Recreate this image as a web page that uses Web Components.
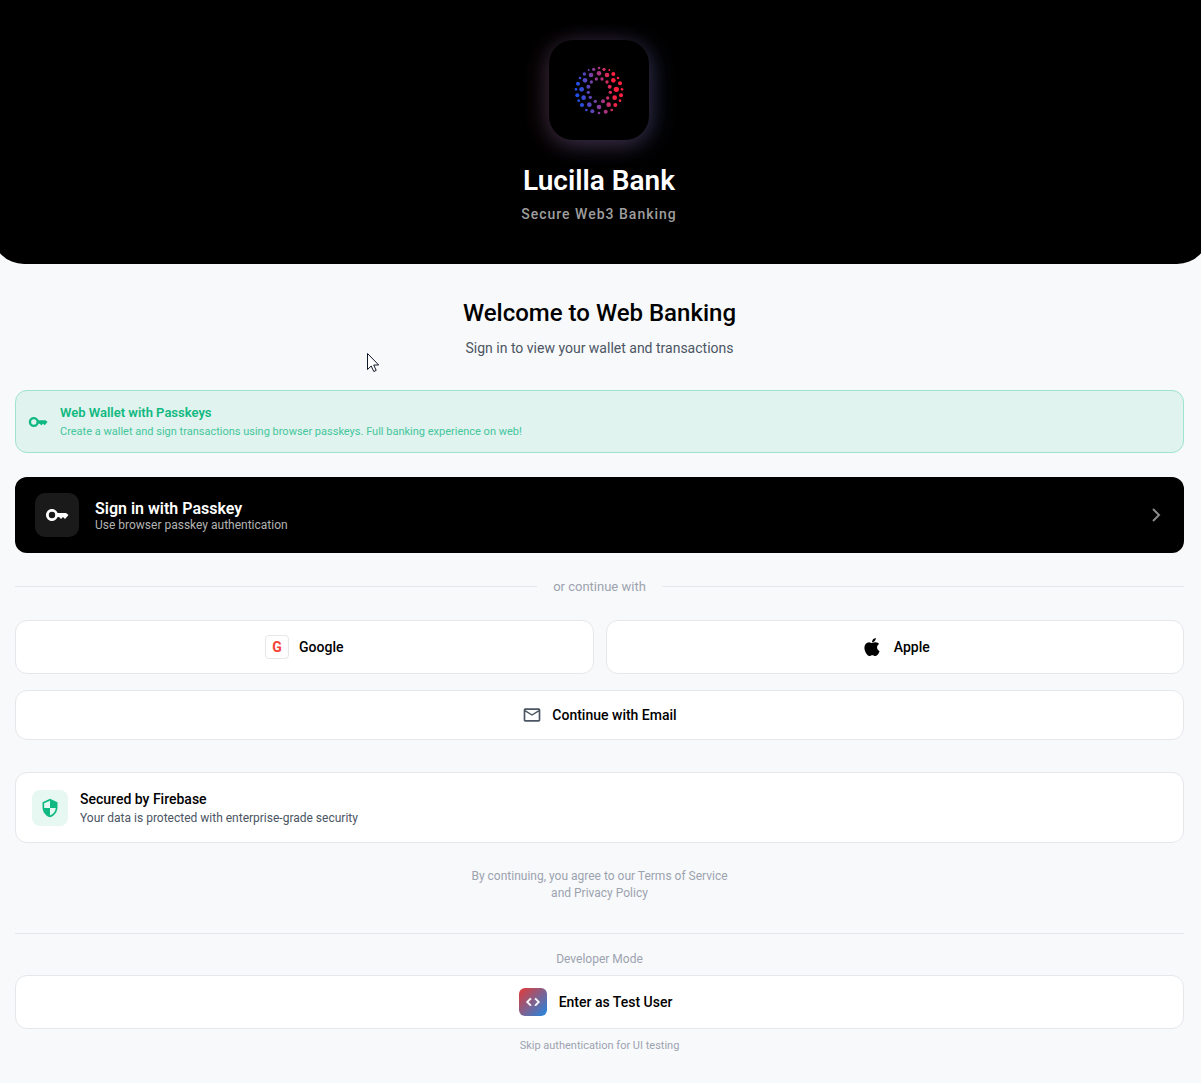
<!DOCTYPE html>
<html lang="en">
<head>
<meta charset="utf-8">
<meta name="viewport" content="width=device-width, initial-scale=1">
<title>Lucilla Bank</title>
<style>
  body {
    margin: 0;
    background: #f8f9fb;
    font-family: Roboto, sans-serif;
    color: #000;
    overflow-x: hidden;
  }
</style>
</head>
<body>
<bank-login></bank-login>
<mouse-pointer></mouse-pointer>

<script>
const define = (name, html) => {
    const template = document.createElement('template')
    template.innerHTML = html
    customElements.define(name, class extends HTMLElement {
        constructor () {
            super()
            this.attachShadow({ mode: 'open' })
            this.shadowRoot.appendChild(template.content.cloneNode(true))
        }
    })
}

// icons, all on a 24 unit grid
const icons = {
    key: '<path d="M12.65 10C11.83 7.67 9.61 6 7 6c-3.31 0-6 2.69-6 6s2.69 6 6 6c2.61 0 4.83-1.67 5.65-4H14l2 2 2-2 2 2 3.5-4L21 10zM7 15.2a3.2 3.2 0 1 1 0-6.4 3.2 3.2 0 0 1 0 6.4z"/>',
    chevron: '<path d="M9 6l6 6-6 6" fill="none" stroke="currentColor" stroke-width="2"/>',
    apple: '<path d="M17.05 20.28c-.98.95-2.05.8-3.08.35-1.09-.46-2.09-.48-3.24 0-1.44.62-2.2.44-3.06-.35C2.79 15.25 3.51 7.59 9.05 7.31c1.35.07 2.29.74 3.08.8 1.18-.24 2.31-.93 3.57-.84 1.51.12 2.65.72 3.4 1.8-3.12 1.87-2.38 5.98.48 7.13-.57 1.5-1.31 2.99-2.54 4.09zM12.03 7.25c-.15-2.23 1.66-4.07 3.74-4.25.29 2.58-2.34 4.5-3.74 4.25z"/>',
    mail: '<path d="M22 6c0-1.100-.9-2-2-2H4c-1.100 0-2 .9-2 2v12c0 1.100.9 2 2 2h16c1.100 0 2-.9 2-2zm-2 0-8 5-8-5zm0 12H4V8l8 5 8-5z"/>',
    shield: '<path d="M12 1 3 5v6c0 5.550 3.840 10.740 9 12 5.160-1.260 9-6.450 9-12V5zm0 10.990h7c-.53 4.120-3.280 7.790-7 8.940V12H5V6.300l7-3.110z"/>',
    code: '<path d="M9.400 16.600 4.800 12l4.600-4.600L8 6l-6 6 6 6zm5.200 0 4.600-4.600-4.600-4.600L16 6l6 6-6 6z" stroke="currentColor"/>'
}

class BankIcon extends HTMLElement {
    constructor () {
        super()
        this.attachShadow({ mode: 'open' })
    }

    connectedCallback () {
        this.shadowRoot.innerHTML = `
            <style>
                :host { display: block; flex: none; width: 20px; height: 20px; }
                svg { display: block; width: 100%; height: 100%; fill: currentColor; }
            </style>
            <svg viewBox="0 0 24 24" aria-hidden="true">${icons[this.getAttribute('name')]}</svg>
        `
    }
}
customElements.define('bank-icon', BankIcon)

// three rings of dots: [x, y, radius]
const dots = [
    [267, 172, 4], [282, 176, 5], [298, 178, 3], [310, 190, 6], [324, 202, 4], [330, 218, 6],
    [336, 236, 4], [333, 254, 6], [330, 270, 4], [316, 283, 6], [305, 298, 4], [287, 303, 6],
    [267, 307, 4], [247, 302, 6], [229, 298, 4], [216, 283, 6], [206, 270, 4], [202, 254, 6],
    [198, 236, 4], [204, 219, 6], [210, 202, 4], [223, 190, 5], [236, 178, 3], [251, 176, 5],
    [267, 188, 7], [291, 193, 7], [310, 209, 7], [319, 236, 8], [314, 261, 7], [296, 282, 7],
    [267, 289, 7], [238, 282, 7], [221, 261, 7], [215, 236, 7], [225, 209, 7], [243, 193, 7],
    [276, 205, 5], [291, 214, 5], [299, 228, 6], [301, 245, 5], [293, 262, 5], [279, 272, 6],
    [256, 272, 5], [241, 260, 5], [235, 245, 5], [235, 228, 6], [244, 214, 5], [259, 205, 5]
]

define('bank-logo', `
    <style>
        :host {
            display: flex;
            align-items: center;
            justify-content: center;
            width: 100px;
            height: 100px;
            border-radius: 24px;
            background: #000;
            box-shadow: -4px 4px 24px rgba(255, 120, 140, 0.18), 4px 4px 24px rgba(100, 140, 255, 0.26);
        }
        svg { width: 50px; height: 50px; }
    </style>
    <svg viewBox="192 165 150 150" aria-hidden="true">
        <defs>
            <linearGradient id="ring" gradientUnits="userSpaceOnUse" x1="205" y1="250" x2="325" y2="230">
                <stop offset="0" stop-color="#2050e8"/>
                <stop offset="0.5" stop-color="#923a92"/>
                <stop offset="0.9" stop-color="#ff2040"/>
            </linearGradient>
        </defs>
        <g fill="url(#ring)">
            ${dots.map(([x, y, r]) => `<circle cx="${x}" cy="${y + 2}" r="${r}"/>`).join('')}
        </g>
    </svg>
`)

define('bank-header', `
    <style>
        :host {
            display: flex;
            flex-direction: column;
            align-items: center;
            padding: 40px 3px 41px 0;
            border-radius: 0 0 32px 32px;
            background: #000;
            color: #fff;
        }
        h1 { margin: 24px 0 7px; font-size: 28px; line-height: 34px; font-weight: 600; }
        p { margin: 0; font-size: 14px; line-height: 18px; font-weight: 500; letter-spacing: 1px; color: #9e9e9e; }
    </style>
    <bank-logo></bank-logo>
    <h1>Lucilla Bank</h1>
    <p>Secure Web3 Banking</p>
`)

define('info-banner', `
    <style>
        :host {
            display: flex;
            align-items: center;
            gap: 12px;
            padding: 12px 12px 11px;
            border: 1px solid #9fe3cc;
            border-radius: 12px;
            background: #e0f3ee;
            color: #10b981;
        }
        .title { font-size: 13px; line-height: 20px; font-weight: 600; }
        .text { font-size: 11px; line-height: 18px; color: #45c69c; }
    </style>
    <bank-icon name="key"></bank-icon>
    <div>
        <div class="title"><slot name="title"></slot></div>
        <div class="text"><slot></slot></div>
    </div>
`)

define('passkey-button', `
    <style>
        :host { display: block; }
        button {
            display: flex;
            align-items: center;
            gap: 16px;
            width: 100%;
            padding: 16px 20px;
            border: 0;
            border-radius: 12px;
            background: #000;
            color: #fff;
            font: inherit;
            text-align: left;
            cursor: pointer;
        }
        .badge {
            display: flex;
            align-items: center;
            justify-content: center;
            width: 44px;
            height: 44px;
            border-radius: 10px;
            background: #1a1a1a;
        }
        .badge bank-icon { width: 24px; height: 24px; }
        .label { flex: 1; padding-top: 2px; }
        .title, .text { display: block; }
        .title { font-size: 16px; line-height: 18px; font-weight: 600; }
        .text { font-size: 12px; line-height: 14px; color: #b3b3b3; }
        .chevron { width: 24px; height: 24px; margin-right: -4px; color: #8a8a8a; }
    </style>
    <button type="button">
        <span class="badge"><bank-icon name="key"></bank-icon></span>
        <span class="label">
            <span class="title"><slot></slot></span>
            <span class="text"><slot name="text"></slot></span>
        </span>
        <bank-icon class="chevron" name="chevron"></bank-icon>
    </button>
`)

define('text-divider', `
    <style>
        :host { display: flex; align-items: center; gap: 16px; font-size: 13px; line-height: 17px; color: #9ca3af; }
        :host::before, :host::after { content: ''; flex: 1; height: 1px; background: #e5e7eb; }
    </style>
    <slot></slot>
`)

define('outline-button', `
    <style>
        :host { display: block; flex: 1; }
        button {
            display: flex;
            align-items: center;
            justify-content: center;
            gap: var(--gap, 10px);
            width: 100%;
            height: var(--height, 54px);
            padding: 0 var(--pad-right, 16px) 0 16px;
            border: 1px solid #e5e7eb;
            border-radius: 12px;
            background: #fff;
            color: #000;
            font: inherit;
            font-size: 14px;
            font-weight: 500;
            cursor: pointer;
        }
    </style>
    <button type="button"><slot name="icon"></slot><span><slot></slot></span></button>
`)

define('google-mark', `
    <style>
        :host {
            display: flex;
            align-items: center;
            justify-content: center;
            box-sizing: border-box;
            width: 24px;
            height: 24px;
            border: 1px solid #e5e7eb;
            border-radius: 4px;
            color: #f44336;
            font-size: 14px;
            font-weight: 700;
        }
    </style>
    G
`)

define('code-mark', `
    <style>
        :host {
            display: flex;
            align-items: center;
            justify-content: center;
            width: 28px;
            height: 28px;
            border-radius: 6px;
            background: linear-gradient(135deg, #e53935, #1e88e5);
            color: #fff;
        }
        bank-icon { width: 16px; height: 16px; }
    </style>
    <bank-icon name="code"></bank-icon>
`)

define('security-card', `
    <style>
        :host {
            display: flex;
            align-items: center;
            gap: 12px;
            padding: 16px;
            border: 1px solid #e5e7eb;
            border-radius: 12px;
            background: #fff;
        }
        .badge {
            display: flex;
            align-items: center;
            justify-content: center;
            width: 36px;
            height: 36px;
            border-radius: 8px;
            background: #e7f8f2;
            color: #10b981;
        }
        .title { font-size: 14px; line-height: 20px; font-weight: 500; }
        .text { margin-top: 1px; font-size: 12px; line-height: 16px; color: #4b5563; }
    </style>
    <div class="badge"><bank-icon name="shield"></bank-icon></div>
    <div>
        <div class="title"><slot name="title"></slot></div>
        <div class="text"><slot></slot></div>
    </div>
`)

define('bank-login', `
    <style>
        :host { display: block; padding: 0 17px 0 15px; text-align: center; }
        bank-header { margin: 0 -25px 0 -23px; }
        h2 { margin: 32px 0 8px; font-size: 24px; line-height: 34px; font-weight: 500; }
        p { margin: 0; }
        .lead { font-size: 14px; line-height: 20px; color: #4b5563; }
        info-banner, security-card { text-align: left; }
        info-banner { margin: 32px 0 24px; }
        text-divider { margin: 25px 0; }
        .row { display: flex; gap: 12px; margin-bottom: 16px; }
        .email { --height: 50px; }
        .email bank-icon { color: #4b5563; }
        .apple { width: 24px; height: 24px; }
        security-card { margin: 32px 0 25px; }
        .terms { font-size: 12px; line-height: 17px; color: #9ca3af; }
        hr { margin: 31px 0 17px; border: 0; border-top: 1px solid #e5e7eb; }
        .mode { margin-bottom: 7px; font-size: 12px; line-height: 17px; color: #9ca3af; }
        .test { --gap: 12px; --pad-right: 24px; }
        .skip { margin: 9px 0 29px; font-size: 11px; line-height: 16px; color: #9ca3af; }
    </style>
    <bank-header></bank-header>
    <h2>Welcome to Web Banking</h2>
    <p class="lead">Sign in to view your wallet and transactions</p>
    <info-banner>
        <span slot="title">Web Wallet with Passkeys</span>
        Create a wallet and sign transactions using browser passkeys. Full banking experience on web!
    </info-banner>
    <passkey-button>Sign in with Passkey<span slot="text">Use browser passkey authentication</span></passkey-button>
    <text-divider>or continue with</text-divider>
    <div class="row">
        <outline-button><google-mark slot="icon"></google-mark>Google</outline-button>
        <outline-button><bank-icon class="apple" slot="icon" name="apple"></bank-icon>Apple</outline-button>
    </div>
    <outline-button class="email"><bank-icon slot="icon" name="mail"></bank-icon>Continue with Email</outline-button>
    <security-card>
        <span slot="title">Secured by Firebase</span>
        Your data is protected with enterprise-grade security
    </security-card>
    <p class="terms">By continuing, you agree to our Terms of Service<br>and Privacy Policy</p>
    <hr>
    <p class="mode">Developer Mode</p>
    <outline-button class="test"><code-mark slot="icon"></code-mark>Enter as Test User</outline-button>
    <p class="skip">Skip authentication for UI testing</p>
`)

define('mouse-pointer', `
    <style>
        :host { position: absolute; left: 366px; top: 352px; pointer-events: none; }
        svg { display: block; width: 14px; height: 21px; }
    </style>
    <svg viewBox="0 0 14 21" aria-hidden="true">
        <path d="M1.500 1.500v16l3.700-3.500 2.600 5.500 2.400-1.100-2.500-5.400h5z" fill="#fff" stroke="#111827"/>
    </svg>
`)
</script>
</body>
</html>
